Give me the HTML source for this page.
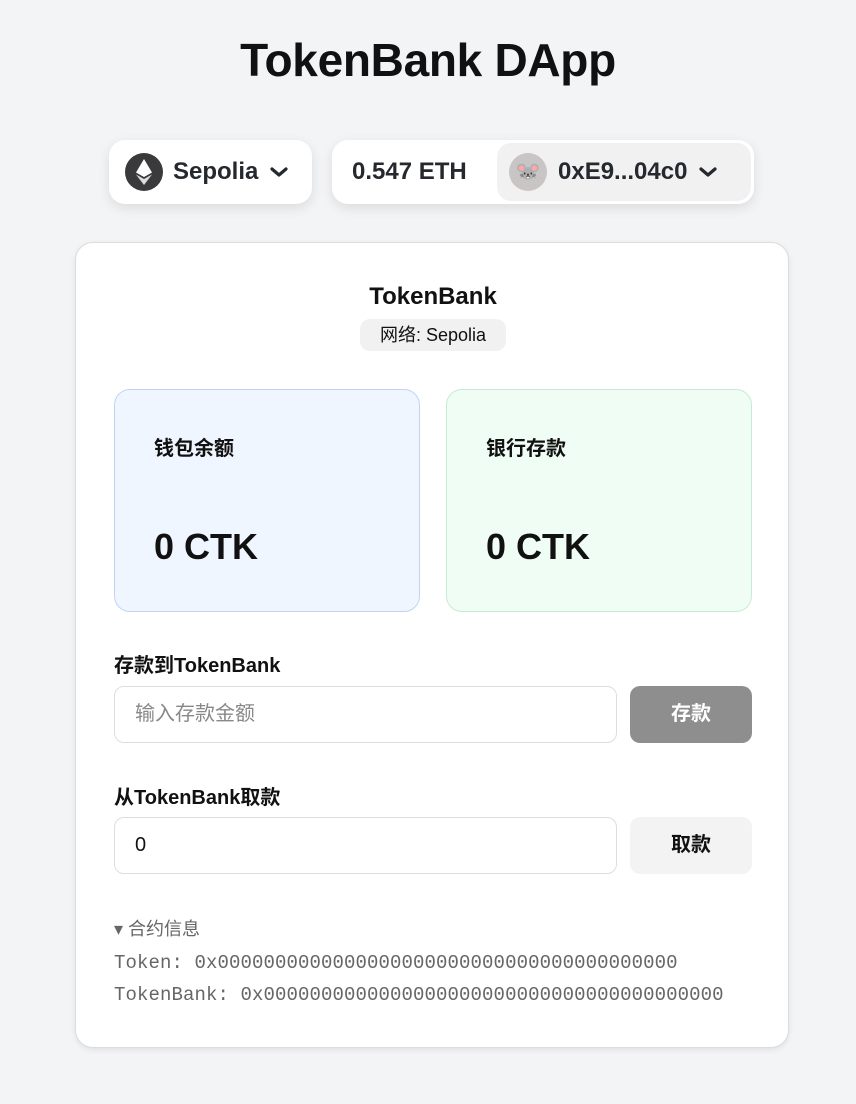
<!DOCTYPE html>
<html><head><meta charset="utf-8"><style>
*{box-sizing:border-box;margin:0;padding:0}
body{width:856px;height:1104px;background:#f3f4f6;font-family:"Liberation Sans","Noto Sans CJK SC",sans-serif;color:#111;position:relative;overflow:hidden}
h1{position:absolute;top:33px;left:0;width:856px;text-align:center;font-size:46px;font-weight:bold;letter-spacing:-0.3px}
.pill{position:absolute;background:#fff;border-radius:16px;box-shadow:0 4px 12px rgba(0,0,0,.1);display:flex;align-items:center;font-weight:bold;font-size:24px;color:#25292e}
.card{position:absolute;left:75px;top:242px;width:714px;height:806px;background:#fff;border:1px solid #dcdcdc;border-radius:18px;box-shadow:0 2px 6px rgba(0,0,0,.08)}
.abs{position:absolute}
.box{position:absolute;top:146px;width:306px;height:223px;border-radius:16px}
.box .t{position:absolute;left:39px;top:42px;font-size:20px;font-weight:bold}
.box .v{position:absolute;left:39px;top:136px;font-size:36px;font-weight:bold}
.lbl{position:absolute;left:38px;font-size:20px;font-weight:bold}
.inp{position:absolute;left:38px;width:503px;height:57px;border:1px solid #ddd;border-radius:10px;font-size:20px;padding:0 20px;line-height:55px}
.btn{position:absolute;left:554px;width:122px;height:57px;border-radius:10px;font-size:20px;font-weight:bold;text-align:center;line-height:57px}
.mono{position:absolute;left:38px;font-family:"Liberation Mono",monospace;font-size:19px;letter-spacing:0.1px;color:#666}
</style></head><body>
<h1>TokenBank DApp</h1>
<div class="pill" style="left:109px;top:140px;width:203px;height:64px">
<svg style="margin-left:16px" width="38" height="38" viewBox="0 0 38 38"><circle cx="19" cy="19" r="19" fill="#3a3a3c"/><path d="M19 6 L27 19.5 L19 24 L11 19.5Z" fill="#fff"/><path d="M19 26 L27 21.5 L19 32 L11 21.5Z" fill="#ddd"/></svg>
<span style="margin-left:10px">Sepolia</span><svg style="margin-left:12px" width="18" height="12" viewBox="0 0 18 12"><path d="M2 3 L9 9 L16 3" stroke="#25292e" stroke-width="3.2" fill="none" stroke-linecap="round" stroke-linejoin="round"/></svg></div>
<div class="pill" style="left:332px;top:140px;width:422px;height:64px">
<span style="margin-left:20px">0.547 ETH</span>
<div style="position:absolute;left:165px;top:3px;width:254px;height:58px;background:#f1f1f1;border-radius:14px;display:flex;align-items:center">
<div style="margin-left:12px;width:38px;height:38px;border-radius:50%;background:#c9c5c5;text-align:center;line-height:38px;font-size:20px">🐭</div>
<span style="margin-left:11px">0xE9...04c0</span><svg style="margin-left:12px" width="18" height="12" viewBox="0 0 18 12"><path d="M2 3 L9 9 L16 3" stroke="#25292e" stroke-width="3.2" fill="none" stroke-linecap="round" stroke-linejoin="round"/></svg></div></div>
<div class="card">
<div class="abs" style="left:0;width:714px;top:40px;text-align:center;font-size:24px;font-weight:bold">TokenBank</div>
<div class="abs" style="left:284px;top:76px;width:146px;height:32px;background:#f1f1f1;border-radius:10px;text-align:center;line-height:32px;font-size:18px">网络: Sepolia</div>
<div class="box" style="left:38px;background:#eff6ff;border:1px solid #bfd4f4"><div class="t">钱包余额</div><div class="v">0 CTK</div></div>
<div class="box" style="left:370px;background:#f0fdf4;border:1px solid #c5ecd2"><div class="t">银行存款</div><div class="v">0 CTK</div></div>
<div class="lbl" style="top:406px">存款到TokenBank</div>
<div class="inp" style="top:443px;color:#888">输入存款金额</div>
<div class="btn" style="top:443px;background:#8e8e8e;color:#fff">存款</div>
<div class="lbl" style="top:538px">从TokenBank取款</div>
<div class="inp" style="top:574px;color:#111">0</div>
<div class="btn" style="top:574px;background:#f3f3f3;color:#111">取款</div>
<div class="abs" style="left:38px;top:672px;font-size:18px;color:#666">▾ 合约信息</div>
<div class="mono" style="top:709px">Token: 0x0000000000000000000000000000000000000000</div>
<div class="mono" style="top:741px">TokenBank: 0x0000000000000000000000000000000000000000</div>
</div>
</body></html>
